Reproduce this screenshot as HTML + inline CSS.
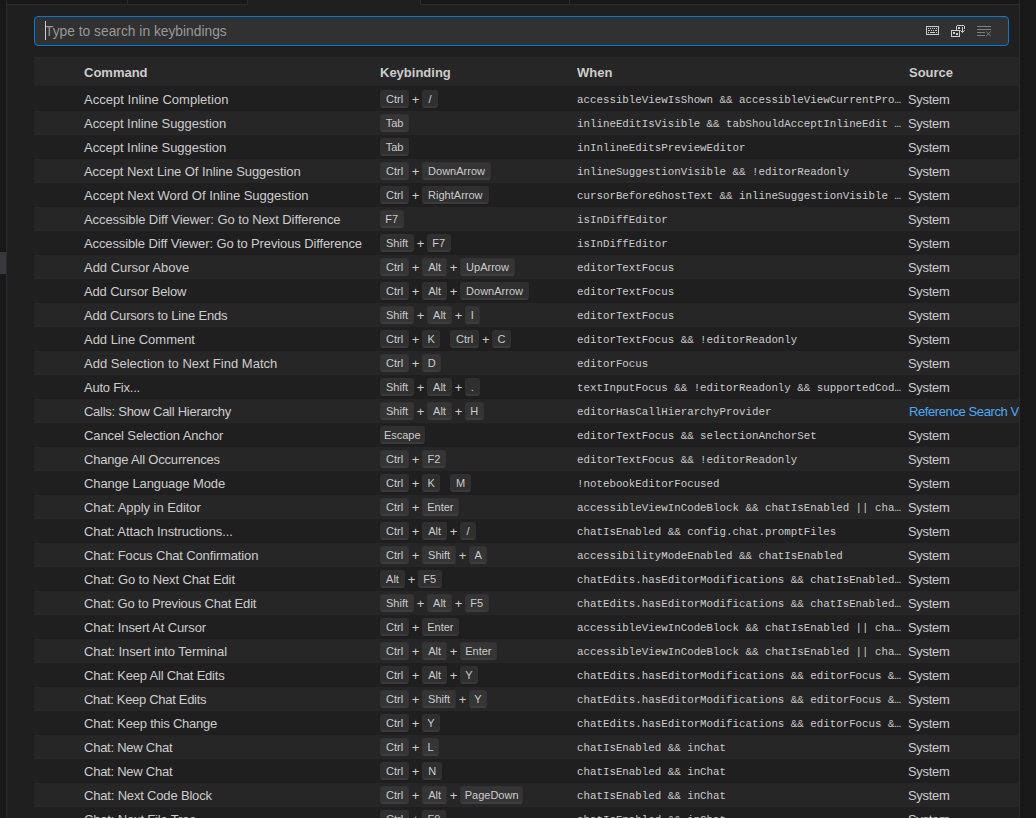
<!DOCTYPE html>
<html><head><meta charset="utf-8">
<style>
html,body{margin:0;padding:0;}
body{width:1036px;height:818px;overflow:hidden;position:relative;background:#1f1f1f;font-family:"Liberation Sans",sans-serif;color:#cccccc;}
.abs{position:absolute;}
#lside{left:0;top:0;width:6px;height:818px;background:#181818;}
#lborder{left:6px;top:0;width:1px;height:818px;background:#2b2b2b;}
#lthumb{left:0;top:252px;width:6px;height:22px;background:#37373d;}
#rside{left:1020px;top:0;width:16px;height:818px;background:#181818;}
#rborder{left:1019px;top:0;width:1px;height:818px;background:#2b2b2b;}
.tab{position:absolute;top:0;height:4px;background:#181818;border-bottom:1px solid #2b2b2b;}
.tabdiv{position:absolute;top:0;height:5px;width:1px;background:#2b2b2b;}
#search{left:34px;top:16px;width:973px;height:28px;background:#313131;border:1px solid #0078d4;border-radius:4px;}
#caret{left:45px;top:21px;width:1px;height:19px;background:#cccccc;}
#ph{left:45px;top:17px;height:30px;line-height:30px;font-size:13.8px;color:#989898;white-space:nowrap;}
#hdr{left:34px;top:57px;width:985px;height:29px;background:#262626;}
.h{position:absolute;top:58px;height:29px;line-height:29px;font-size:13px;font-weight:bold;color:#cccccc;white-space:nowrap;}
.row{position:absolute;left:34px;width:985px;height:24px;overflow:hidden;}
.row.odd{background:#262626;}
.row > div{position:absolute;top:1px;height:24px;line-height:24px;white-space:nowrap;}
.c1{left:50px;font-size:13px;}
.c2{left:346px;top:-1px !important;}
.c3{left:543px;font-family:"Liberation Mono",monospace;font-size:10.8px;color:#cccccc;}
.c4{left:874px;font-size:13px;letter-spacing:-0.3px;}
.c4.link{color:#4daafc;letter-spacing:-0.4px;left:875px;}
.chord{display:inline-block;vertical-align:middle;line-height:normal;}
.cs{display:inline-block;width:10px;}
.k{display:inline-block;box-sizing:border-box;text-align:center;vertical-align:middle;font-size:11px;line-height:10px;padding:3px 5px;border:1px solid rgba(51,51,51,0.6);border-bottom-color:rgba(68,68,68,0.6);box-shadow:inset 0 -1px 0 rgba(68,68,68,0.6);border-radius:3px;background:rgba(128,128,128,0.17);margin:0 2px;color:#cccccc;}
.k:first-child{margin-left:0;}
.k:last-child{margin-right:0;}
.sep{display:inline-block;vertical-align:middle;font-size:13px;width:9px;text-align:center;}
</style></head><body>
<div class="abs" id="lside"></div>
<div class="abs" id="lthumb"></div>
<div class="abs" id="lborder"></div>
<div class="abs" id="rside"></div>
<div class="abs" id="rborder"></div>
<div class="tab" style="left:7px;width:241px"></div>
<div class="tabdiv" style="left:127px"></div>
<div class="tabdiv" style="left:247px"></div>
<div class="tab" style="left:420px;width:599px"></div>
<div class="tabdiv" style="left:420px"></div>
<div class="tabdiv" style="left:569px"></div>

<div class="abs" id="search"></div>
<div class="abs" id="ph">Type to search in keybindings</div>
<div class="abs" id="caret"></div>
<svg class="abs" style="left:0;top:0" width="1036" height="60" viewBox="0 0 1036 60">
<g fill="#cccccc" shape-rendering="crispEdges">
<!-- keyboard -->
<rect x="926" y="26" width="13" height="1"/><rect x="926" y="34" width="13" height="1"/>
<rect x="926" y="26" width="1" height="9"/><rect x="938" y="26" width="1" height="9"/>
<rect x="928" y="28" width="1" height="1"/><rect x="930" y="28" width="1" height="1"/><rect x="932" y="28" width="1" height="1"/><rect x="934" y="28" width="1" height="1"/><rect x="936" y="28" width="1" height="1"/>
<rect x="928" y="30" width="2" height="1"/><rect x="931" y="30" width="1" height="1"/><rect x="933" y="30" width="1" height="1"/><rect x="935" y="30" width="2" height="1"/>
<rect x="928" y="32" width="1" height="1"/><rect x="930" y="32" width="5" height="1"/><rect x="936" y="32" width="1" height="1"/>
<!-- sort precedence -->
<rect x="951" y="30" width="9" height="1"/><rect x="951" y="36" width="9" height="1"/>
<rect x="951" y="30" width="1" height="7"/><rect x="959" y="30" width="1" height="7"/>
<rect x="953" y="32" width="2" height="2"/><rect x="956" y="33" width="2" height="2"/>
<rect x="957" y="25" width="7" height="1"/><rect x="956" y="26" width="1" height="4"/><rect x="964" y="26" width="1" height="3"/>
<rect x="958" y="27" width="2" height="2"/>
<rect x="962" y="27" width="1" height="5"/>
</g>
<g stroke="#cccccc" fill="none" stroke-width="1">
<path d="M960.3 30.3 L962.5 32.5 L964.7 30.3"/>
</g>
<g fill="#7f7f7f" shape-rendering="crispEdges">
<rect x="977" y="26" width="14" height="1"/><rect x="977" y="29" width="14" height="1"/>
<rect x="977" y="32" width="8" height="1"/><rect x="977" y="35" width="8" height="1"/>
</g>
<g stroke="#7f7f7f" fill="none" stroke-width="0.95">
<path d="M986.2 31.6 L990.8 36.1 M990.8 31.6 L986.2 36.1"/>
</g>
</svg>

<div class="abs" id="hdr"></div>
<div class="h" style="left:84px">Command</div>
<div class="h" style="left:380px">Keybinding</div>
<div class="h" style="left:577px">When</div>
<div class="h" style="left:909px">Source</div>

<div class="row" style="top:87px"><div class="c1" style="letter-spacing:0.026px">Accept Inline Completion</div><div class="c2"><span class="chord"><span class="k">Ctrl</span><span class="sep">+</span><span class="k" style="width:16px;padding-left:0;padding-right:0;white-space:nowrap">/</span></span></div><div class="c3">accessibleViewIsShown &amp;&amp; accessibleViewCurrentPro…</div><div class="c4">System</div></div>
<div class="row odd" style="top:111px"><div class="c1" style="letter-spacing:-0.039px">Accept Inline Suggestion</div><div class="c2"><span class="chord"><span class="k" style="width:29px;padding-left:0;padding-right:0;white-space:nowrap">Tab</span></span></div><div class="c3">inlineEditIsVisible &amp;&amp; tabShouldAcceptInlineEdit …</div><div class="c4">System</div></div>
<div class="row" style="top:135px"><div class="c1" style="letter-spacing:-0.039px">Accept Inline Suggestion</div><div class="c2"><span class="chord"><span class="k" style="width:29px;padding-left:0;padding-right:0;white-space:nowrap">Tab</span></span></div><div class="c3">inInlineEditsPreviewEditor</div><div class="c4">System</div></div>
<div class="row odd" style="top:159px"><div class="c1" style="letter-spacing:-0.064px">Accept Next Line Of Inline Suggestion</div><div class="c2"><span class="chord"><span class="k">Ctrl</span><span class="sep">+</span><span class="k">DownArrow</span></span></div><div class="c3">inlineSuggestionVisible &amp;&amp; !editorReadonly</div><div class="c4">System</div></div>
<div class="row" style="top:183px"><div class="c1" style="letter-spacing:-0.017px">Accept Next Word Of Inline Suggestion</div><div class="c2"><span class="chord"><span class="k">Ctrl</span><span class="sep">+</span><span class="k">RightArrow</span></span></div><div class="c3">cursorBeforeGhostText &amp;&amp; inlineSuggestionVisible …</div><div class="c4">System</div></div>
<div class="row odd" style="top:207px"><div class="c1" style="letter-spacing:-0.080px">Accessible Diff Viewer: Go to Next Difference</div><div class="c2"><span class="chord"><span class="k" style="width:23.5px;padding-left:0;padding-right:0;white-space:nowrap">F7</span></span></div><div class="c3">isInDiffEditor</div><div class="c4">System</div></div>
<div class="row" style="top:231px"><div class="c1" style="letter-spacing:-0.123px">Accessible Diff Viewer: Go to Previous Difference</div><div class="c2"><span class="chord"><span class="k">Shift</span><span class="sep">+</span><span class="k" style="width:23.5px;padding-left:0;padding-right:0;white-space:nowrap">F7</span></span></div><div class="c3">isInDiffEditor</div><div class="c4">System</div></div>
<div class="row odd" style="top:255px"><div class="c1" style="letter-spacing:-0.020px">Add Cursor Above</div><div class="c2"><span class="chord"><span class="k">Ctrl</span><span class="sep">+</span><span class="k" style="width:25px;padding-left:0;padding-right:0;white-space:nowrap">Alt</span><span class="sep">+</span><span class="k">UpArrow</span></span></div><div class="c3">editorTextFocus</div><div class="c4">System</div></div>
<div class="row" style="top:279px"><div class="c1" style="letter-spacing:-0.153px">Add Cursor Below</div><div class="c2"><span class="chord"><span class="k">Ctrl</span><span class="sep">+</span><span class="k" style="width:25px;padding-left:0;padding-right:0;white-space:nowrap">Alt</span><span class="sep">+</span><span class="k">DownArrow</span></span></div><div class="c3">editorTextFocus</div><div class="c4">System</div></div>
<div class="row odd" style="top:303px"><div class="c1" style="letter-spacing:-0.204px">Add Cursors to Line Ends</div><div class="c2"><span class="chord"><span class="k">Shift</span><span class="sep">+</span><span class="k" style="width:25px;padding-left:0;padding-right:0;white-space:nowrap">Alt</span><span class="sep">+</span><span class="k" style="width:14.5px;padding-left:0;padding-right:0;white-space:nowrap">I</span></span></div><div class="c3">editorTextFocus</div><div class="c4">System</div></div>
<div class="row" style="top:327px"><div class="c1" style="letter-spacing:-0.020px">Add Line Comment</div><div class="c2"><span class="chord"><span class="k">Ctrl</span><span class="sep">+</span><span class="k" style="width:18px;padding-left:0;padding-right:0;white-space:nowrap">K</span></span><span class="cs"></span><span class="chord"><span class="k">Ctrl</span><span class="sep">+</span><span class="k" style="width:18.5px;padding-left:0;padding-right:0;white-space:nowrap">C</span></span></div><div class="c3">editorTextFocus &amp;&amp; !editorReadonly</div><div class="c4">System</div></div>
<div class="row odd" style="top:351px"><div class="c1" style="letter-spacing:0.010px">Add Selection to Next Find Match</div><div class="c2"><span class="chord"><span class="k">Ctrl</span><span class="sep">+</span><span class="k" style="width:19.3px;padding-left:0;padding-right:0;white-space:nowrap">D</span></span></div><div class="c3">editorFocus</div><div class="c4">System</div></div>
<div class="row" style="top:375px"><div class="c1" style="letter-spacing:-0.240px">Auto Fix...</div><div class="c2"><span class="chord"><span class="k">Shift</span><span class="sep">+</span><span class="k" style="width:25px;padding-left:0;padding-right:0;white-space:nowrap">Alt</span><span class="sep">+</span><span class="k" style="width:14.5px;padding-left:0;padding-right:0;white-space:nowrap">.</span></span></div><div class="c3">textInputFocus &amp;&amp; !editorReadonly &amp;&amp; supportedCod…</div><div class="c4">System</div></div>
<div class="row odd" style="top:399px"><div class="c1" style="letter-spacing:-0.268px">Calls: Show Call Hierarchy</div><div class="c2"><span class="chord"><span class="k">Shift</span><span class="sep">+</span><span class="k" style="width:25px;padding-left:0;padding-right:0;white-space:nowrap">Alt</span><span class="sep">+</span><span class="k" style="width:18.5px;padding-left:0;padding-right:0;white-space:nowrap">H</span></span></div><div class="c3">editorHasCallHierarchyProvider</div><div class="c4 link">Reference Search View</div></div>
<div class="row" style="top:423px"><div class="c1" style="letter-spacing:-0.105px">Cancel Selection Anchor</div><div class="c2"><span class="chord"><span class="k" style="width:44.5px;padding-left:0;padding-right:0;white-space:nowrap">Escape</span></span></div><div class="c3">editorTextFocus &amp;&amp; selectionAnchorSet</div><div class="c4">System</div></div>
<div class="row odd" style="top:447px"><div class="c1" style="letter-spacing:-0.195px">Change All Occurrences</div><div class="c2"><span class="chord"><span class="k">Ctrl</span><span class="sep">+</span><span class="k" style="width:23.5px;padding-left:0;padding-right:0;white-space:nowrap">F2</span></span></div><div class="c3">editorTextFocus &amp;&amp; !editorReadonly</div><div class="c4">System</div></div>
<div class="row" style="top:471px"><div class="c1" style="letter-spacing:-0.105px">Change Language Mode</div><div class="c2"><span class="chord"><span class="k">Ctrl</span><span class="sep">+</span><span class="k" style="width:18px;padding-left:0;padding-right:0;white-space:nowrap">K</span></span><span class="cs"></span><span class="chord"><span class="k">M</span></span></div><div class="c3">!notebookEditorFocused</div><div class="c4">System</div></div>
<div class="row odd" style="top:495px"><div class="c1" style="letter-spacing:-0.045px">Chat: Apply in Editor</div><div class="c2"><span class="chord"><span class="k">Ctrl</span><span class="sep">+</span><span class="k" style="width:36.5px;padding-left:0;padding-right:0;white-space:nowrap">Enter</span></span></div><div class="c3">accessibleViewInCodeBlock &amp;&amp; chatIsEnabled || cha…</div><div class="c4">System</div></div>
<div class="row" style="top:519px"><div class="c1" style="letter-spacing:-0.107px">Chat: Attach Instructions...</div><div class="c2"><span class="chord"><span class="k">Ctrl</span><span class="sep">+</span><span class="k" style="width:25px;padding-left:0;padding-right:0;white-space:nowrap">Alt</span><span class="sep">+</span><span class="k" style="width:16px;padding-left:0;padding-right:0;white-space:nowrap">/</span></span></div><div class="c3">chatIsEnabled &amp;&amp; config.chat.promptFiles</div><div class="c4">System</div></div>
<div class="row odd" style="top:543px"><div class="c1" style="letter-spacing:-0.146px">Chat: Focus Chat Confirmation</div><div class="c2"><span class="chord"><span class="k">Ctrl</span><span class="sep">+</span><span class="k">Shift</span><span class="sep">+</span><span class="k" style="width:18px;padding-left:0;padding-right:0;white-space:nowrap">A</span></span></div><div class="c3">accessibilityModeEnabled &amp;&amp; chatIsEnabled</div><div class="c4">System</div></div>
<div class="row" style="top:567px"><div class="c1" style="letter-spacing:-0.116px">Chat: Go to Next Chat Edit</div><div class="c2"><span class="chord"><span class="k" style="width:25px;padding-left:0;padding-right:0;white-space:nowrap">Alt</span><span class="sep">+</span><span class="k" style="width:23.5px;padding-left:0;padding-right:0;white-space:nowrap">F5</span></span></div><div class="c3">chatEdits.hasEditorModifications &amp;&amp; chatIsEnabled…</div><div class="c4">System</div></div>
<div class="row odd" style="top:591px"><div class="c1" style="letter-spacing:-0.183px">Chat: Go to Previous Chat Edit</div><div class="c2"><span class="chord"><span class="k">Shift</span><span class="sep">+</span><span class="k" style="width:25px;padding-left:0;padding-right:0;white-space:nowrap">Alt</span><span class="sep">+</span><span class="k" style="width:23.5px;padding-left:0;padding-right:0;white-space:nowrap">F5</span></span></div><div class="c3">chatEdits.hasEditorModifications &amp;&amp; chatIsEnabled…</div><div class="c4">System</div></div>
<div class="row" style="top:615px"><div class="c1" style="letter-spacing:-0.138px">Chat: Insert At Cursor</div><div class="c2"><span class="chord"><span class="k">Ctrl</span><span class="sep">+</span><span class="k" style="width:36.5px;padding-left:0;padding-right:0;white-space:nowrap">Enter</span></span></div><div class="c3">accessibleViewInCodeBlock &amp;&amp; chatIsEnabled || cha…</div><div class="c4">System</div></div>
<div class="row odd" style="top:639px"><div class="c1" style="letter-spacing:-0.048px">Chat: Insert into Terminal</div><div class="c2"><span class="chord"><span class="k">Ctrl</span><span class="sep">+</span><span class="k" style="width:25px;padding-left:0;padding-right:0;white-space:nowrap">Alt</span><span class="sep">+</span><span class="k" style="width:36.5px;padding-left:0;padding-right:0;white-space:nowrap">Enter</span></span></div><div class="c3">accessibleViewInCodeBlock &amp;&amp; chatIsEnabled || cha…</div><div class="c4">System</div></div>
<div class="row" style="top:663px"><div class="c1" style="letter-spacing:-0.221px">Chat: Keep All Chat Edits</div><div class="c2"><span class="chord"><span class="k">Ctrl</span><span class="sep">+</span><span class="k" style="width:25px;padding-left:0;padding-right:0;white-space:nowrap">Alt</span><span class="sep">+</span><span class="k" style="width:17.5px;padding-left:0;padding-right:0;white-space:nowrap">Y</span></span></div><div class="c3">chatEdits.hasEditorModifications &amp;&amp; editorFocus &amp;…</div><div class="c4">System</div></div>
<div class="row odd" style="top:687px"><div class="c1" style="letter-spacing:-0.310px">Chat: Keep Chat Edits</div><div class="c2"><span class="chord"><span class="k">Ctrl</span><span class="sep">+</span><span class="k">Shift</span><span class="sep">+</span><span class="k" style="width:17.5px;padding-left:0;padding-right:0;white-space:nowrap">Y</span></span></div><div class="c3">chatEdits.hasEditorModifications &amp;&amp; editorFocus &amp;…</div><div class="c4">System</div></div>
<div class="row" style="top:711px"><div class="c1" style="letter-spacing:-0.224px">Chat: Keep this Change</div><div class="c2"><span class="chord"><span class="k">Ctrl</span><span class="sep">+</span><span class="k" style="width:17.5px;padding-left:0;padding-right:0;white-space:nowrap">Y</span></span></div><div class="c3">chatEdits.hasEditorModifications &amp;&amp; editorFocus &amp;…</div><div class="c4">System</div></div>
<div class="row odd" style="top:735px"><div class="c1" style="letter-spacing:-0.246px">Chat: New Chat</div><div class="c2"><span class="chord"><span class="k">Ctrl</span><span class="sep">+</span><span class="k" style="width:17px;padding-left:0;padding-right:0;white-space:nowrap">L</span></span></div><div class="c3">chatIsEnabled &amp;&amp; inChat</div><div class="c4">System</div></div>
<div class="row" style="top:759px"><div class="c1" style="letter-spacing:-0.246px">Chat: New Chat</div><div class="c2"><span class="chord"><span class="k">Ctrl</span><span class="sep">+</span><span class="k" style="width:20px;padding-left:0;padding-right:0;white-space:nowrap">N</span></span></div><div class="c3">chatIsEnabled &amp;&amp; inChat</div><div class="c4">System</div></div>
<div class="row odd" style="top:783px"><div class="c1" style="letter-spacing:-0.175px">Chat: Next Code Block</div><div class="c2"><span class="chord"><span class="k">Ctrl</span><span class="sep">+</span><span class="k" style="width:25px;padding-left:0;padding-right:0;white-space:nowrap">Alt</span><span class="sep">+</span><span class="k" style="width:63px;padding-left:0;padding-right:0;white-space:nowrap">PageDown</span></span></div><div class="c3">chatIsEnabled &amp;&amp; inChat</div><div class="c4">System</div></div>
<div class="row" style="top:807px"><div class="c1" style="letter-spacing:-0.158px">Chat: Next File Tree</div><div class="c2"><span class="chord"><span class="k">Ctrl</span><span class="sep">+</span><span class="k" style="width:23.5px;padding-left:0;padding-right:0;white-space:nowrap">F9</span></span></div><div class="c3">chatIsEnabled &amp;&amp; inChat</div><div class="c4">System</div></div>
</body></html>
